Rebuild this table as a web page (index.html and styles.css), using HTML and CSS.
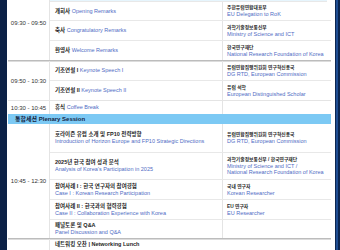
FILE: index.html
```html
<!DOCTYPE html>
<html lang="ko">
<head>
<meta charset="utf-8">
<link rel="stylesheet" href="styles.css">
</head>
<body>
<div class="frame">
  <div class="side-l"></div>
  <div class="main">
    <div class="sched">
      <div class="group strong">
        <div class="time">09:30 - 09:50</div>
        <div class="rows">
          <div class="row hl h16"></div>
          <div class="row h19">
            <div class="prog"><p class="line"><b>개회사</b> <span class="en">Opening Remarks</span></p></div>
            <div class="org"><p class="ko">주한유럽연합대표부</p><p class="en2">EU Delegation to RoK</p></div>
          </div>
          <div class="row h20">
            <div class="prog"><p class="line"><b>축사</b> <span class="en">Congratulatory Remarks</span></p></div>
            <div class="org"><p class="ko">과학기술정보통신부</p><p class="en2">Ministry of Science and ICT</p></div>
          </div>
          <div class="row h19">
            <div class="prog"><p class="line"><b>환영사</b> <span class="en">Welcome Remarks</span></p></div>
            <div class="org"><p class="ko">한국연구재단</p><p class="en2">National Research Foundation of Korea</p></div>
          </div>
        </div>
      </div>

      <div class="group">
        <div class="time">09:50 - 10:30</div>
        <div class="rows">
          <div class="row h20">
            <div class="prog"><p class="line"><b>기조연설 I</b> <span class="en">Keynote Speech I</span></p></div>
            <div class="org"><p class="ko">유럽연합집행위원회 연구혁신총국</p><p class="en2">DG RTD, European Commission</p></div>
          </div>
          <div class="row h19">
            <div class="prog"><p class="line"><b>기조연설 II</b> <span class="en">Keynote Speech II</span></p></div>
            <div class="org"><p class="ko">유럽 석학</p><p class="en2">European Distinguished Scholar</p></div>
          </div>
        </div>
      </div>

      <div class="group plain">
        <div class="time">10:30 - 10:45</div>
        <div class="rows">
          <div class="row h13">
            <div class="prog"><p class="line"><b>휴식</b> <span class="en">Coffee Break</span></p></div>
            <div class="org"></div>
          </div>
        </div>
      </div>

      <div class="session">통합세션 Plenary Session</div>

      <div class="group strong">
        <div class="time">10:45 - 12:30</div>
        <div class="rows">
          <div class="row h29">
            <div class="prog"><p class="ko-t">호라이즌 유럽 소개 및 FP10 전략방향</p><p class="en-t">Introduction of Horizon Europe and FP10 Strategic Directions</p></div>
            <div class="org"><p class="ko">유럽연합집행위원회 연구혁신총국</p><p class="en2">DG RTD, European Commission</p></div>
          </div>
          <div class="row h27">
            <div class="prog"><p class="ko-t">2025년 한국 참여 성과 분석</p><p class="en-t">Analysis of Korea’s Participation in 2025</p></div>
            <div class="org"><p class="ko">과학기술정보통신부 / 한국연구재단</p><p class="en2">Ministry of Science and ICT /</p><p class="en2">National Research Foundation of Korea</p></div>
          </div>
          <div class="row h20">
            <div class="prog"><p class="ko-t">참여사례 I : 한국 연구자의 참여경험</p><p class="en-t">Case I : Korean Research Participation</p></div>
            <div class="org"><p class="ko">국내 연구자</p><p class="en2">Korean Researcher</p></div>
          </div>
          <div class="row h20">
            <div class="prog"><p class="ko-t">참여사례 II : 한국과의 협력경험</p><p class="en-t">Case II : Collaboration Experience with Korea</p></div>
            <div class="org"><p class="ko">EU 연구자</p><p class="en2">EU Researcher</p></div>
          </div>
          <div class="row h18">
            <div class="prog"><p class="ko-t">패널토론 및 Q&amp;A</p><p class="en-t">Panel Discussion and Q&amp;A</p></div>
            <div class="org"></div>
          </div>
        </div>
      </div>

      <div class="group">
        <div class="time"></div>
        <div class="rows">
          <div class="row h24 top">
            <div class="prog"><p class="ko-t">네트워킹 오찬 | Networking Lunch</p></div>
            <div class="org"></div>
          </div>
        </div>
      </div>
    </div>
  </div>
  <div class="side-r"></div>
</div>
</body>
</html>
```

FILE: styles.css
```css
* {
  box-sizing: border-box;
  margin: 0;
  padding: 0;
}

body {
  margin: 0;
  width: 340px;
  height: 250px;
  overflow: hidden;
  background: #ffffff;
  font-family: "Liberation Sans", "Noto Sans CJK KR", sans-serif;
  color: #222222;
}

.frame {
  display: flex;
  height: 250px;
}

.side-l {
  width: 7px;
  flex: none;
  background: #0b2146;
}

.side-r {
  width: 5px;
  flex: none;
  background: linear-gradient(to right, #0c2650 0 1px, #1f4d92 1px 3px, #0b2550 3px);
}

.main {
  flex: 1;
  padding: 0 4px 0 1px;
  overflow: hidden;
}

.sched {
  margin-top: -14px;
}

.group {
  display: flex;
  border-bottom: 1px solid #e4e4e4;
}

.group.strong {
  border-bottom: 1px solid #bcbcbc;
  box-shadow: 0 1px 0 #dcdcdc;
}

.group.plain {
  border-bottom: 0;
}

.time {
  width: 42px;
  flex: none;
  display: flex;
  align-items: center;
  justify-content: center;
  border-right: 1px solid #e4e4e4;
  font-size: 6px;
  color: #333333;
  white-space: nowrap;
}

.rows {
  flex: 1;
  display: flex;
  flex-direction: column;
}

.row {
  display: flex;
  border-bottom: 1px solid #e8e8e8;
}

.row:last-child {
  border-bottom: 0;
}

.row.hl {
  background: #e6f5fd;
  margin-right: 4px;
}

.h13 { height: 13px; }
.h16 { height: 16px; }
.h18 { height: 18px; }
.h19 { height: 19px; }
.h20 { height: 20px; }
.h24 { height: 24px; }
.h27 { height: 27px; }
.h29 { height: 29px; }

.prog {
  width: 173px;
  flex: none;
  display: flex;
  flex-direction: column;
  justify-content: center;
  padding-left: 5px;
  border-right: 1px solid #e4e4e4;
  white-space: nowrap;
}

.row.top .prog {
  justify-content: flex-start;
  padding-top: 2px;
  border-right: 0;
}

.org {
  flex: 1;
  display: flex;
  flex-direction: column;
  justify-content: center;
  padding-left: 4px;
  white-space: nowrap;
}

.line {
  font-size: 5.5px;
  line-height: 7px;
}

.line b {
  font-weight: 700;
  color: #1e1e1e;
}

.en {
  color: #4f6cc4;
}

.ko-t {
  font-size: 5.5px;
  line-height: 7px;
  font-weight: 700;
  color: #1e1e1e;
}

.en-t {
  font-size: 5.5px;
  line-height: 7px;
  color: #4f6cc4;
}

.ko {
  font-size: 4.8px;
  line-height: 6px;
  font-weight: 700;
  color: #2a2a2a;
}

.en2 {
  font-size: 5.5px;
  line-height: 6px;
  color: #4f6cc4;
}

.session {
  height: 10px;
  background: #7cc9f4;
  padding-left: 7px;
  font-size: 6px;
  line-height: 10px;
  font-weight: 700;
  color: #13243f;
}
```
